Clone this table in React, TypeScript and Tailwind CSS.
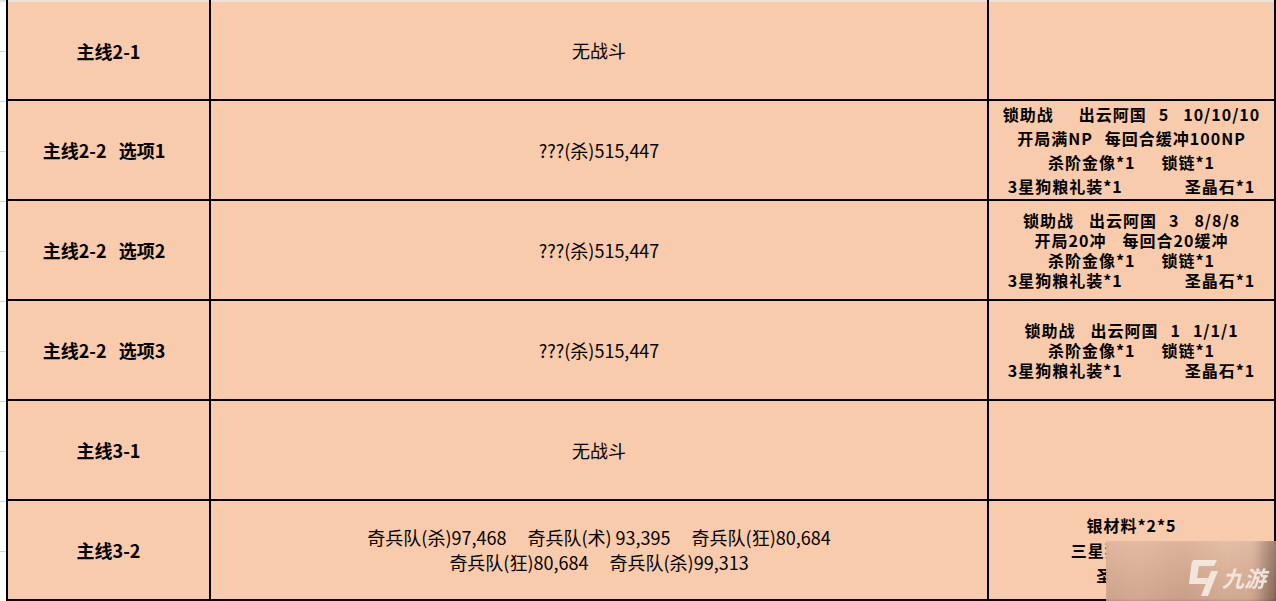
import React from "react";

const cell = "bg-[#f8cbad] flex flex-col items-center justify-center text-black";
const c1 = cell + " font-['Noto_Sans_CJK_SC',sans-serif] font-bold text-[18px] leading-[22px]";
const c2 = cell + " font-['Noto_Sans_CJK_SC',sans-serif] text-[18px] whitespace-pre";
const c3 = cell + " font-['Noto_Sans_CJK_SC',sans-serif] font-bold text-[16px] tracking-[1px] whitespace-pre";

function Line({ children, className = "" }: { children: React.ReactNode; className?: string }) {
  return <div className={"flex justify-center " + className}>{children}</div>;
}

function Loot({ lh }: { lh: string }) {
  return (
    <>
      <Line className={lh}>
        <span>杀阶金像*1</span>
        <span className="ml-[26px]">锁链*1</span>
      </Line>
      <Line className={lh}>
        <span>3星狗粮礼装*1</span>
        <span className="ml-[62px]">圣晶石*1</span>
      </Line>
    </>
  );
}

export default function App() {
  return (
    <div className="relative w-[1276px] h-[601px] overflow-hidden bg-white flex">
      <div className="w-[6px] flex flex-col border-t-2 border-[#e3e3e3]">
        {Array.from({ length: 12 }).map((_, i) => (
          <div key={i} className="h-[50px] shrink-0 border-b border-[#d6d6d6]" />
        ))}
      </div>
      <div className="grid grid-cols-[201px_776px_285px] grid-rows-[99px_98px_98px_98px_98px_98px] gap-[2px] bg-black px-[2px] pb-[2px]">
        {/* Row 1 */}
        <div className={c1 + " border-t-2 border-[#e3e3e3]"}>主线2-1</div>
        <div className={c2 + " border-t-2 border-[#e3e3e3]"}>无战斗</div>
        <div className={cell + " border-t-2 border-[#e3e3e3]"} />

        {/* Row 2 */}
        <div className={c1 + " pr-[9px]"}>
          <div className="flex gap-[12px]">
            <span>主线2-2</span>
            <span>选项1</span>
          </div>
        </div>
        <div className={c2}>???(杀)515,447</div>
        <div className={c3}>
          <Line className="leading-[24px]">
            <span>锁助战</span>
            <span className="ml-[25px]">出云阿国</span>
            <span className="ml-[12px]">5</span>
            <span className="ml-[14px]">10/10/10</span>
          </Line>
          <Line className="leading-[24px]">
            <span>开局满NP</span>
            <span className="ml-[12px]">每回合缓冲100NP</span>
          </Line>
          <Loot lh="leading-[24px]" />
        </div>

        {/* Row 3 */}
        <div className={c1 + " pr-[9px]"}>
          <div className="flex gap-[12px]">
            <span>主线2-2</span>
            <span>选项2</span>
          </div>
        </div>
        <div className={c2}>???(杀)515,447</div>
        <div className={c3}>
          <Line className="leading-[20px]">
            <span>锁助战</span>
            <span className="ml-[15px]">出云阿国</span>
            <span className="ml-[12px]">3</span>
            <span className="ml-[15px]">8/8/8</span>
          </Line>
          <Line className="leading-[20px]">
            <span>开局20冲</span>
            <span className="ml-[16px]">每回合20缓冲</span>
          </Line>
          <Loot lh="leading-[20px]" />
        </div>

        {/* Row 4 */}
        <div className={c1 + " pr-[9px]"}>
          <div className="flex gap-[12px]">
            <span>主线2-2</span>
            <span>选项3</span>
          </div>
        </div>
        <div className={c2}>???(杀)515,447</div>
        <div className={c3}>
          <Line className="leading-[20px]">
            <span>锁助战</span>
            <span className="ml-[15px]">出云阿国</span>
            <span className="ml-[12px]">1</span>
            <span className="ml-[12px]">1/1/1</span>
          </Line>
          <Loot lh="leading-[20px]" />
        </div>

        {/* Row 5 */}
        <div className={c1}>主线3-1</div>
        <div className={c2}>无战斗</div>
        <div className={cell} />

        {/* Row 6 */}
        <div className={c1}>主线3-2</div>
        <div className={c2}>
          <Line className="leading-[25px]">
            <span>奇兵队(杀)97,468</span>
            <span className="ml-[21px]">奇兵队(术) 93,395</span>
            <span className="ml-[21px]">奇兵队(狂)80,684</span>
          </Line>
          <Line className="leading-[25px]">
            <span>奇兵队(狂)80,684</span>
            <span className="ml-[21px]">奇兵队(杀)99,313</span>
          </Line>
        </div>
        <div className={c3}>
          <Line className="leading-[25px]">银材料*2*5</Line>
          <Line className="leading-[25px]">三星狗粮礼装*1</Line>
          <Line className="leading-[25px]">圣晶石*1</Line>
        </div>
      </div>

      {/* watermark */}
      <div className="absolute left-[1106px] top-[541px] w-[170px] h-[60px] overflow-hidden">
        <div className="absolute inset-[-4px] blur-[3px] bg-[linear-gradient(90deg,#d6ac92_0%,#dcb299_20%,#d2a88f_45%,#ddb49b_70%,#d9b099_85%,#9a7968_94%,#7a5d4f_100%)]" />
        <div className="absolute inset-0 bg-[linear-gradient(180deg,rgba(255,225,205,0.2)_0%,rgba(110,70,50,0.1)_100%)]" />
        <svg className="absolute left-[80px] top-[17px]" width="34" height="40" viewBox="0 0 34 40">
          <path d="M8 2 H31 L28 8 H13 L11 20 H22 L20 26 H3 L5.5 6 Q6.2 2 8 2 Z" fill="#f3e9e2" fillOpacity="0.93" />
          <path d="M25 13 H32 L22 38 H15 Z" fill="#f3e9e2" fillOpacity="0.93" />
        </svg>
        <div className="absolute left-[116px] top-[25px] font-['Noto_Sans_CJK_SC',sans-serif] font-bold italic text-[22px] leading-[22px] text-[#f3e9e2] opacity-95">
          九游
        </div>
      </div>
    </div>
  );
}
